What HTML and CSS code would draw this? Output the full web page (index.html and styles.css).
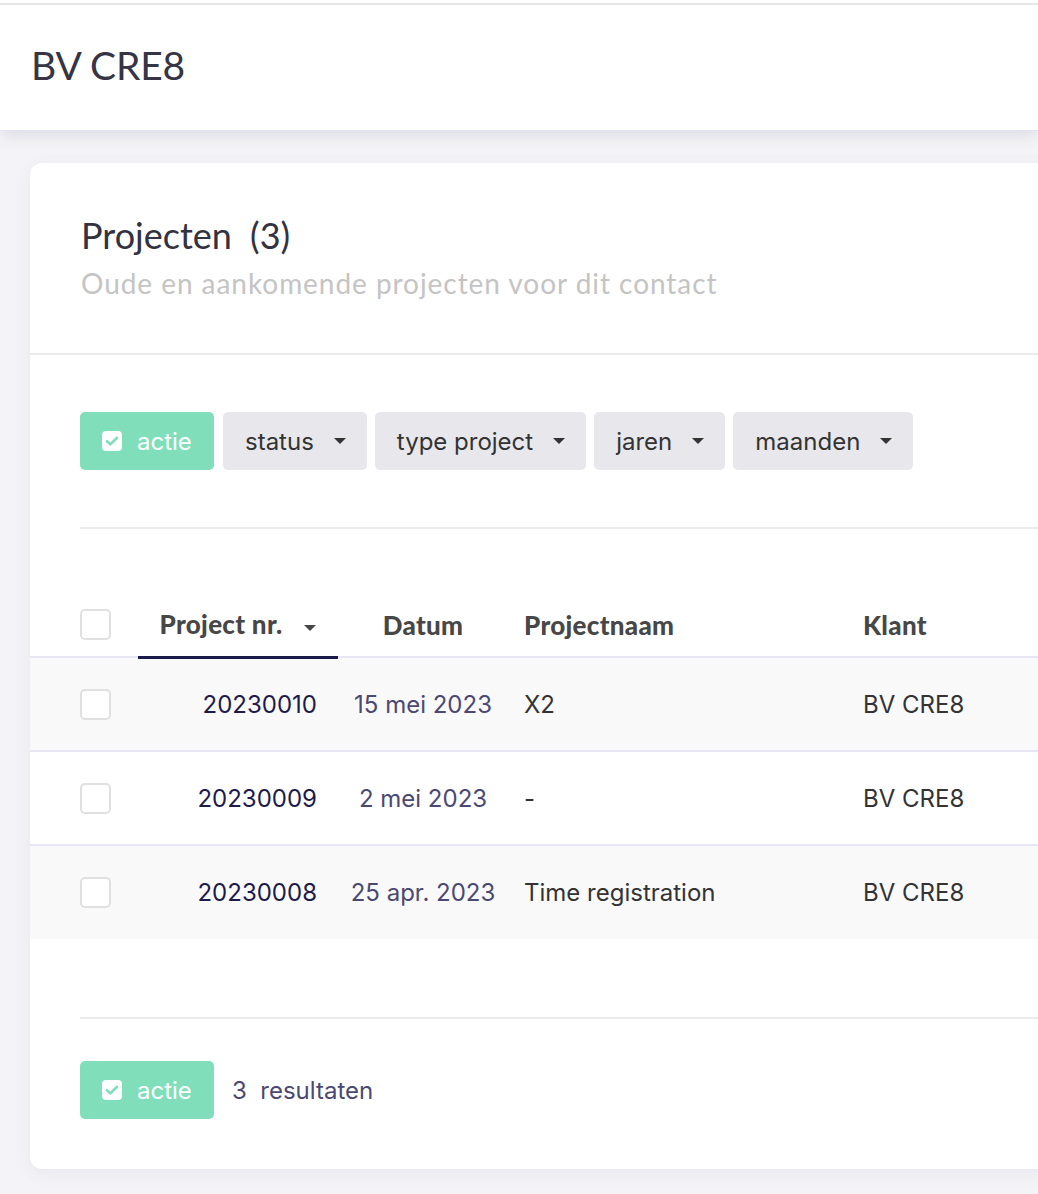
FILE: index.html
```html
<!DOCTYPE html>
<html lang="nl">
<head>
<meta charset="utf-8">
<title>BV CRE8</title>
<link rel="stylesheet" href="styles.css">
</head>
<body>
<header class="topbar">
  <h1 class="topbar-title">BV CRE8</h1>
</header>
<main class="content">
  <section class="card">
    <div class="card-head">
      <h2 class="card-title">Projecten <span class="count">(3)</span></h2>
      <p class="card-sub">Oude en aankomende projecten voor dit contact</p>
    </div>
    <div class="filters">
      <button class="btn btn-green"><span class="chk"><svg viewBox="0 0 20 20" width="20" height="20"><rect x="0" y="0" width="20" height="20" rx="4" fill="#fff"/><path d="M5 10.2l3.3 3.2L15 6.8" fill="none" stroke="#80dfba" stroke-width="2.6" stroke-linecap="round" stroke-linejoin="round"/></svg></span>actie</button>
      <button class="btn btn-gray">status<span class="caret"></span></button>
      <button class="btn btn-gray">type project<span class="caret"></span></button>
      <button class="btn btn-gray">jaren<span class="caret"></span></button>
      <button class="btn btn-gray">maanden<span class="caret"></span></button>
    </div>
    <hr class="rule">
    <table class="grid">
      <thead>
        <tr>
          <th class="c-check"><span class="box"></span></th>
          <th class="c-nr sorted">Project nr.<span class="caret caret-dark"></span></th>
          <th class="c-date">Datum</th>
          <th class="c-name">Projectnaam</th>
          <th class="c-client">Klant</th>
        </tr>
      </thead>
      <tbody>
        <tr class="alt">
          <td class="c-check"><span class="box"></span></td>
          <td class="c-nr">20230010</td>
          <td class="c-date">15 mei 2023</td>
          <td class="c-name">X2</td>
          <td class="c-client">BV CRE8</td>
        </tr>
        <tr>
          <td class="c-check"><span class="box"></span></td>
          <td class="c-nr">20230009</td>
          <td class="c-date">2 mei 2023</td>
          <td class="c-name">-</td>
          <td class="c-client">BV CRE8</td>
        </tr>
        <tr class="alt last">
          <td class="c-check"><span class="box"></span></td>
          <td class="c-nr">20230008</td>
          <td class="c-date">25 apr. 2023</td>
          <td class="c-name">Time registration</td>
          <td class="c-client">BV CRE8</td>
        </tr>
      </tbody>
    </table>
    <hr class="rule rule-foot">
    <div class="footer">
      <button class="btn btn-green"><span class="chk"><svg viewBox="0 0 20 20" width="20" height="20"><rect x="0" y="0" width="20" height="20" rx="4" fill="#fff"/><path d="M5 10.2l3.3 3.2L15 6.8" fill="none" stroke="#80dfba" stroke-width="2.6" stroke-linecap="round" stroke-linejoin="round"/></svg></span>actie</button>
      <span class="results">3&nbsp;&nbsp;resultaten</span>
    </div>
  </section>
</main>
</body>
</html>
```

FILE: styles.css
```css
* { box-sizing: border-box; }
html, body { margin: 0; padding: 0; }
body {
  background: #f4f4f8;
  font-family: "Inter", "Liberation Sans", sans-serif;
  color: #333;
  overflow: hidden;
  width: 1038px;
  height: 1194px;
  border-top: 3px solid #fff;
}
.topbar {
  background: #fff;
  border-top: 2px solid #e6e6ea;
  border-bottom: 1px solid #e4e2f2;
  height: 128px;
  display: flex;
  align-items: center;
  padding-left: 31px;
  padding-bottom: 6px;
  box-shadow: 0 6px 14px rgba(40, 40, 80, 0.10);
  position: relative;
  z-index: 1;
}
.topbar-title {
  margin: 0;
  font-family: "Lato", sans-serif;
  font-weight: 400;
  font-size: 39px;
  color: #363545;
  letter-spacing: -0.2px;
}
.content {
  padding: 32px 0 0 30px;
}
.card {
  width: 1200px;
  background: #fff;
  border-radius: 12px;
  box-shadow: 0 4px 18px rgba(40, 40, 90, 0.07);
  padding-bottom: 50px;
}
.card-head {
  padding: 50px 50px 53px 51px;
  border-bottom: 2px solid #ebebee;
}
.card-title {
  margin: 0;
  font-family: "Lato", sans-serif;
  font-weight: 400;
  font-size: 36px;
  line-height: 44px;
  color: #333241;
}
.card-title .count { margin-left: 9px; }
.card-sub {
  margin: 9px 0 0 0;
  font-family: "Lato", sans-serif;
  font-size: 28px;
  line-height: 34px;
  letter-spacing: 0.95px;
  color: #c4c4c4;
}
.filters {
  display: flex;
  gap: 8px;
  padding: 57px 50px 57px 50px;
}
.btn {
  display: inline-flex;
  align-items: center;
  height: 58px;
  border: 0;
  border-radius: 5px;
  font-family: "Inter", sans-serif;
  font-size: 24px;
  padding: 0 21px 0 22px;
  cursor: pointer;
}
.btn-green {
  background: #80dfba;
  color: #fff;
  padding: 0 22px 0 22px;
  width: 134px;
  margin-right: 1px;
}
.chk { display: inline-flex; margin-right: 15px; }
.btn-gray {
  background: #e8e8ec;
  color: #333;
}
.caret {
  display: inline-block;
  width: 0;
  height: 0;
  border-left: 6px solid transparent;
  border-right: 6px solid transparent;
  border-top: 6px solid #333;
  margin-left: 20px;
}
.rule {
  margin: 0 0 0 50px;
  border: 0;
  border-top: 2px solid #ebebee;
}
.grid {
  width: 100%;
  border-collapse: collapse;
  margin-top: 64px;
  table-layout: fixed;
}
.grid th {
  font-family: "Lato", sans-serif;
  font-weight: 900;
  font-size: 26px;
  letter-spacing: 0.3px;
  color: #474747;
  height: 64px;
  border-bottom: 2px solid #e8e6f5;
  text-align: left;
  padding: 0 16px;
}
.grid td {
  height: 94px;
  font-size: 24px;
  color: #333;
  padding: 0 16px;
  border-bottom: 2px solid #e8e6f5;
}
.grid tr.last td { border-bottom: 0; }
.grid tr.alt td { background: #f9f9f9; }
.grid .c-check { width: 108px; padding: 0 0 0 50px; }
.grid .c-nr { width: 200px; }
.grid th.c-nr { text-align: center; padding: 0; }
.grid td.c-nr { text-align: right; padding-right: 21px; color: #1d1b4a; }
.grid th.sorted { border-bottom: 3px solid #1c1a4a; }
.grid .c-date { width: 170px; text-align: center; padding: 0; }
.grid td.c-date { color: #4b4971; }
.grid .c-name { width: 339px; }
.caret-dark { border-top-color: #474747; margin-left: 22px; vertical-align: middle; }
.box {
  display: block;
  width: 31px;
  height: 31px;
  border: 2px solid #e0e0e0;
  border-radius: 5px;
  background: #fff;
}
.rule-foot { margin-top: 78px; }
.footer {
  display: flex;
  align-items: center;
  padding: 42px 50px 0 50px;
  gap: 17px;
}
.results {
  font-size: 24px;
  color: #4b4971;
}
```
